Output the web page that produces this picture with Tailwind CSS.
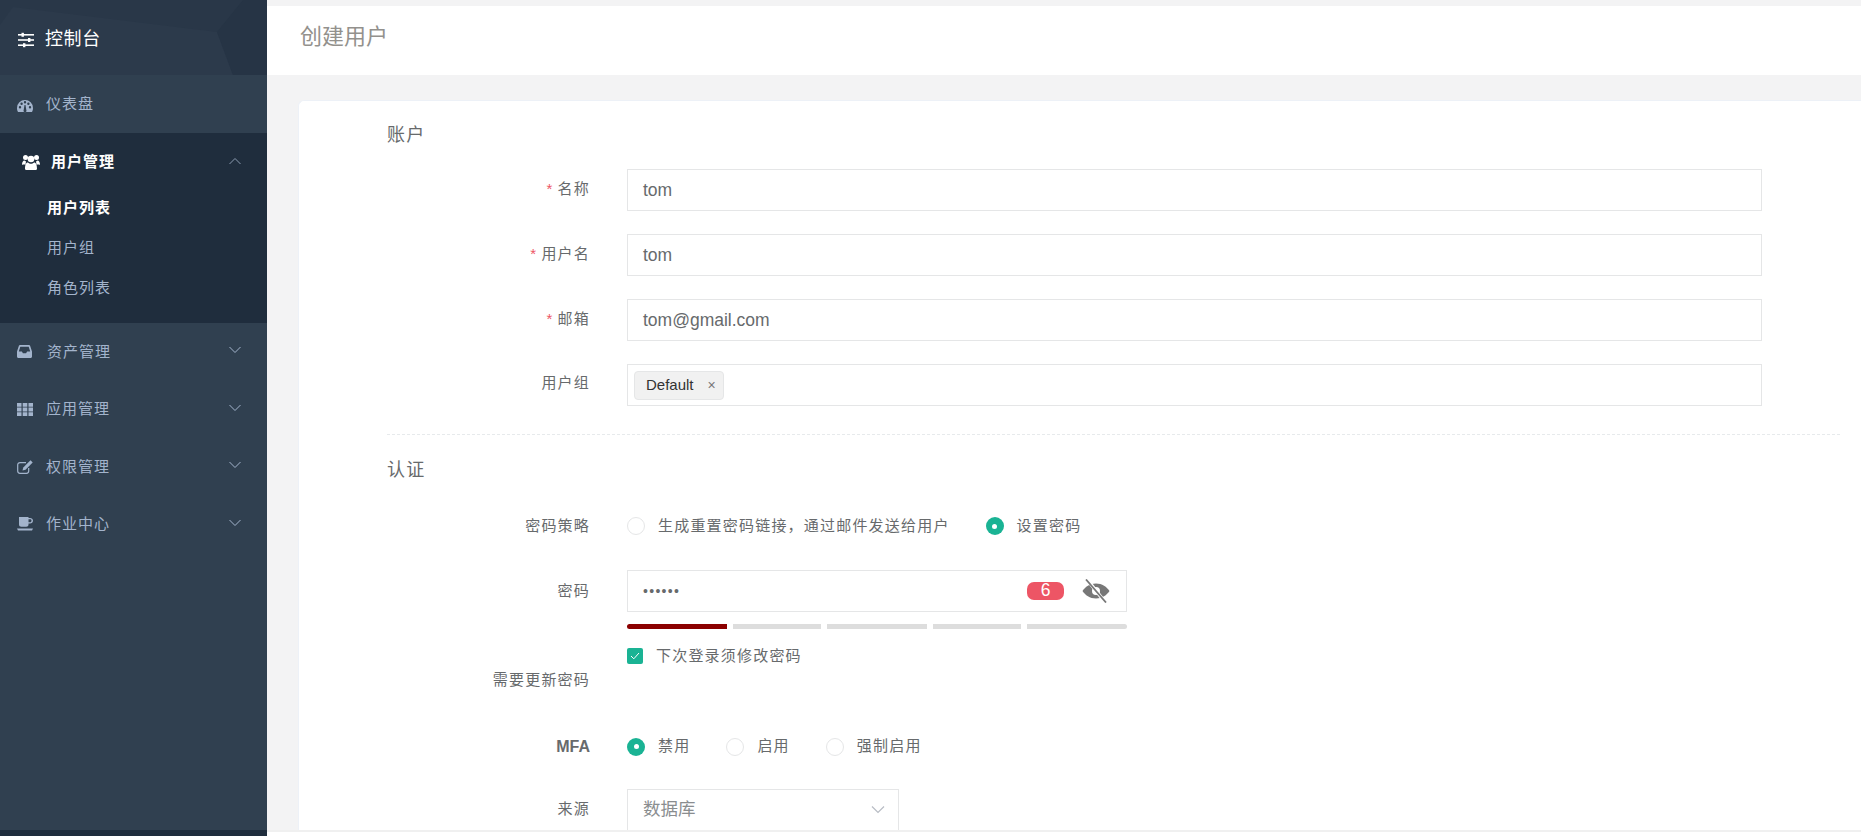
<!DOCTYPE html>
<html lang="zh-CN">
<head>
  <meta charset="UTF-8" />
  <title>创建用户</title>
  <script src="https://cdn.jsdelivr.net/npm/@tailwindcss/browser@4"></script>
</head>
<body class="h-screen overflow-hidden bg-[#f3f3f4] text-[#676a6c] font-['Liberation_Sans','Noto_Sans_CJK_SC',sans-serif]">
<div class="flex h-[836px]">

  <!-- Sidebar -->
  <aside class="w-[267px] shrink-0 flex flex-col bg-[#304050] text-[15px] text-[#a3b4cc] tracking-[1px]">
    <div class="relative h-[75px] bg-[#293748] flex items-center pl-[18px] pt-[4px] text-white text-[18px] tracking-[0.6px] overflow-hidden">
      <svg class="absolute inset-0" width="267" height="75" viewBox="0 0 267 75"><polygon points="0,25 13,7 217,32 233,75 0,75" fill="#2c3a4b"/><polygon points="217,32 243,0 267,0 267,75 233,75" fill="#263445"/></svg>
      <svg class="relative mr-[11px]" width="16" height="16" viewBox="0 0 16 16" fill="#fff"><rect x="0" y="2" width="16" height="1.6"/><rect x="0" y="7.2" width="16" height="1.6"/><rect x="0" y="12.4" width="16" height="1.6"/><rect x="3.5" y="0.8" width="2.4" height="4"/><rect x="10" y="6" width="2.4" height="4"/><rect x="5" y="11.2" width="2.4" height="4"/></svg>
      <span class="relative">控制台</span>
    </div>
    <a class="h-[58px] flex items-center pl-[17px]">
      <svg class="mr-[13px] mt-[4px]" width="16" height="14" viewBox="0 0 16 14" fill="#a3b4cc"><path d="M8 1a8 8 0 0 0-8 8c0 1.600.4 3 1.100 4h13.800c.7-1 1.100-2.400 1.100-4a8 8 0 0 0-8-8zM3 9.500a1.200 1.200 0 1 1 0-2.400 1.200 1.200 0 0 1 0 2.400zm1.600-3.600a1.200 1.200 0 1 1 0-2.400 1.200 1.200 0 0 1 0 2.400zM8 4.400a1.200 1.200 0 1 1 0-2.400 1.200 1.200 0 0 1 0 2.400zm1.300 6.500a1.500 1.500 0 1 1-2.600 0L7.500 6h1zm2.100-5a1.200 1.200 0 1 1 0-2.400 1.200 1.200 0 0 1 0 2.400zM13 9.500a1.200 1.200 0 1 1 0-2.400 1.200 1.200 0 0 1 0 2.400z"/></svg>
      仪表盘
    </a>
    <div class="h-[190px] bg-[#1f2d3d]">
      <div class="h-[58px] flex items-center pl-[22px] pr-[26px] text-white font-bold">
        <svg class="mr-[11px]" width="18" height="16" viewBox="0 0 18 16" fill="#fff"><circle cx="3.500" cy="3.500" r="2.500"/><circle cx="14.500" cy="3.500" r="2.500"/><circle cx="9" cy="5" r="3.300"/><path d="M0 11c0-3 1-4.500 2.500-4.500L4 7.500 3.500 10.500H1.500C.7 10.500 0 11 0 11zM18 11c0-3-1-4.500-2.500-4.500L14 7.500l.5 3h2c.8 0 1.500.5 1.500.5zM4 16c-.6 0-1-.5-1-1.200C3 11 4 8.500 5.800 8.500 7 9.500 8 9.700 9 9.700s2-.2 3.200-1.200C14 8.500 15 11 15 14.800c0 .7-.4 1.200-1 1.200z"/></svg>
        <span class="flex-1">用户管理</span>
        <svg class="mb-[3px]" width="12" height="8" viewBox="0 0 12 8" fill="none" stroke="#8b9bb0" stroke-width="1"><path d="M0.500 7 6 1.500 11.500 7"/></svg>
      </div>
      <div class="pl-[47px] text-[15px]">
        <div class="h-[40px] flex items-center mt-[-3px] text-white font-bold">用户列表</div>
        <div class="h-[40px] flex items-center">用户组</div>
        <div class="h-[40px] flex items-center">角色列表</div>
      </div>
    </div>
    <div class="flex-1">
      <div class="h-[57.500px] flex items-center pl-[17px] pr-[26px]">
        <svg class="mr-[15px]" width="15" height="13" viewBox="0 0 15 13" fill="#a3b4cc"><path d="M3 0h9c.5 0 .9.300 1.100.800L15 6.500V11.500c0 .8-.6 1.500-1.500 1.500h-12C.6 13 0 12.300 0 11.500V6.500L1.900.800C2.100.300 2.500 0 3 0zm.3 1.800L1.800 6.500h3.100l1 1.700h3.200l1-1.700h3.100L11.700 1.800z"/></svg>
        <span class="flex-1">资产管理</span>
        <svg class="mb-[3px]" width="12" height="8" viewBox="0 0 12 8" fill="none" stroke="#a3b4cc" stroke-width="1"><path d="M0.500 1 6 6.500 11.500 1"/></svg>
      </div>
      <div class="h-[57.500px] flex items-center pl-[17px] pr-[26px]">
        <svg class="mr-[13px]" width="16" height="13" viewBox="0 0 16 13" fill="#a3b4cc"><path d="M0 0h4.500v3.800H0zM5.700 0h4.600v3.800H5.700zM11.500 0H16v3.800h-4.500zM0 4.600h4.500v3.800H0zM5.700 4.600h4.600v3.800H5.700zM11.500 4.600H16v3.800h-4.500zM0 9.200h4.500V13H0zM5.700 9.200h4.600V13H5.700zM11.500 9.200H16V13h-4.500z"/></svg>
        <span class="flex-1">应用管理</span>
        <svg class="mb-[3px]" width="12" height="8" viewBox="0 0 12 8" fill="none" stroke="#a3b4cc" stroke-width="1"><path d="M0.500 1 6 6.500 11.500 1"/></svg>
      </div>
      <div class="h-[57.500px] flex items-center pl-[17px] pr-[26px]">
        <svg class="mr-[13px]" width="16" height="14" viewBox="0 0 16 14" fill="none" stroke="#a3b4cc"><path stroke-width="1.200" d="M9 2.600H3C1.700 2.600.700 3.500.700 4.800v6.300c0 1.300 1 2.200 2.300 2.200h6.500c1.300 0 2.200-1 2.200-2.200V8"/><path fill="#a3b4cc" stroke="none" d="M13.500.300 15.700 2.500 8.500 9.700 5.500 10.500 6.300 7.500z"/></svg>
        <span class="flex-1">权限管理</span>
        <svg class="mb-[3px]" width="12" height="8" viewBox="0 0 12 8" fill="none" stroke="#a3b4cc" stroke-width="1"><path d="M0.500 1 6 6.500 11.500 1"/></svg>
      </div>
      <div class="h-[57.500px] flex items-center pl-[17px] pr-[26px]">
        <svg class="mr-[13px]" width="16" height="14" viewBox="0 0 16 14" fill="#a3b4cc"><path d="M2 0h9.500v1h1.500c1.700 0 3 1.100 3 2.700S14.700 6.500 13 6.500h-1.500v1c0 1.300-1 2.300-2.300 2.300H4.300C3 9.800 2 8.800 2 7.500zM11.500 2.300v2.900H13c.9 0 1.500-.6 1.500-1.500s-.6-1.400-1.500-1.400zM0 11.500h16l-1 2H1z"/></svg>
        <span class="flex-1">作业中心</span>
        <svg class="mb-[3px]" width="12" height="8" viewBox="0 0 12 8" fill="none" stroke="#a3b4cc" stroke-width="1"><path d="M0.500 1 6 6.500 11.500 1"/></svg>
      </div>
    </div>
    <div class="h-[6px] bg-[#1f2d3d]"></div>
  </aside>

  <!-- Main -->
  <main class="flex-1 min-w-0 flex flex-col pt-[6px]">
    <div class="h-[69px] shrink-0 bg-white flex items-center pl-[33px] pb-[9px] text-[22px] text-[#93918d]">创建用户</div>

    <div class="flex-1 min-h-0 overflow-hidden pl-[31px] pt-[25px]">
      <div class="h-full bg-white rounded-tl-[6px] border-t border-l border-[#edf1f7] pl-[88px] pr-[21px] text-[15px] tracking-[1.200px]">

        <div class="h-[68px] flex items-center text-[18px] pt-[1px]">账户</div>

        <div class="flex flex-col gap-[23px] w-[1375px]">
          <div class="flex items-center h-[42px]">
            <label class="w-[203px] text-right pb-[2px]"><span class="text-[#ed5565] mr-[4px]">*</span>名称</label>
            <div class="ml-[37px] flex-1 h-full border border-[#e5e6e7] flex items-center pl-[15px] text-[17.500px] tracking-normal">tom</div>
          </div>
          <div class="flex items-center h-[42px]">
            <label class="w-[203px] text-right pb-[2px]"><span class="text-[#ed5565] mr-[4px]">*</span>用户名</label>
            <div class="ml-[37px] flex-1 h-full border border-[#e5e6e7] flex items-center pl-[15px] text-[17.500px] tracking-normal">tom</div>
          </div>
          <div class="flex items-center h-[42px]">
            <label class="w-[203px] text-right pb-[2px]"><span class="text-[#ed5565] mr-[4px]">*</span>邮箱</label>
            <div class="ml-[37px] flex-1 h-full border border-[#e5e6e7] flex items-center pl-[15px] text-[17.500px] tracking-normal">tom@gmail.com</div>
          </div>
          <div class="flex items-center h-[42px]">
            <label class="w-[203px] text-right pb-[3px]">用户组</label>
            <div class="ml-[37px] flex-1 h-full border border-[#e5e6e7] flex items-center pl-[6px] tracking-normal">
              <span class="h-[29px] w-[90px] rounded-[4px] bg-[#f1f1f1] border border-[#e5e6e7] flex items-center pl-[11px] text-[15px] text-[#333]">Default<span class="ml-[14px] text-[#777] text-[14px]">×</span></span>
            </div>
          </div>
        </div>

        <div class="mt-[28px] border-t border-dashed border-[#e7eaec]"></div>

        <div class="h-[69px] flex items-center text-[18px] pt-[1px]">认证</div>

        <div class="flex items-center h-[18px] mt-[13px]">
          <label class="w-[203px] text-right">密码策略</label>
          <div class="ml-[37px] flex items-center">
            <span class="w-[18px] h-[18px] rounded-full border border-[#e5e6e7]"></span>
            <span class="ml-[13px]">生成重置密码链接，通过邮件发送给用户</span>
            <span class="ml-[36px] w-[18px] h-[18px] rounded-full bg-[#1ab394] flex items-center justify-center"><span class="w-[5px] h-[5px] rounded-full bg-white"></span></span>
            <span class="ml-[13px]">设置密码</span>
          </div>
        </div>

        <div class="flex mt-[35px]">
          <label class="w-[203px] text-right h-[42px] leading-[42px]">密码</label>
          <div class="ml-[37px] w-[500px]">
            <div class="h-[42px] border border-[#e5e6e7] flex items-center pl-[15px] pr-[16px] tracking-normal">
              <span class="flex-1 text-[#676a6c] text-[14px] tracking-[1.300px]">••••••</span>
              <span class="w-[37px] h-[18px] rounded-[7px] bg-[#ed5565] text-white text-[17.500px] leading-[17px] text-center">6</span>
              <svg class="ml-[18px]" width="28" height="24" viewBox="0 0 28 24" fill="#777"><path d="M14 4.500C8 4.500 3 8 .5 12c2.500 4 7.500 7.500 13.500 7.500S25 16 27.500 12C25 8 20 4.500 14 4.500zm0 11.500a4 4 0 1 1 0-8 4 4 0 0 1 0 8z"/><path d="M5 0.500 23 23" stroke="#fff" stroke-width="3.500"/><path d="M4 .5 24 23.500" stroke="#777" stroke-width="1.800"/></svg>
            </div>
            <div class="flex gap-[6px] mt-[12px]">
              <span class="h-[5px] w-[100px] rounded-l-full bg-[#8b0000]"></span>
              <span class="h-[5px] w-[88px] bg-[#ddd]"></span>
              <span class="h-[5px] w-[100px] bg-[#ddd]"></span>
              <span class="h-[5px] w-[88px] bg-[#ddd]"></span>
              <span class="h-[5px] w-[100px] rounded-r-full bg-[#ddd]"></span>
            </div>
          </div>
        </div>

        <div class="flex mt-[18px]">
          <label class="w-[203px] text-right pt-[22px]">需要更新密码</label>
          <div class="ml-[37px] flex items-center h-[18px]">
            <span class="w-[16px] h-[16px] rounded-[2px] bg-[#1ab394] flex items-center justify-center">
              <svg width="10" height="8" viewBox="0 0 10 8" fill="none" stroke="#fff" stroke-width="1"><path d="M1 4 3.800 6.800 9 1"/></svg>
            </span>
            <span class="ml-[13px]">下次登录须修改密码</span>
          </div>
        </div>

        <div class="flex items-center h-[18px] mt-[46px]">
          <label class="w-[203px] text-right font-bold tracking-normal text-[16px]">MFA</label>
          <div class="ml-[37px] flex items-center">
            <span class="w-[18px] h-[18px] rounded-full bg-[#1ab394] flex items-center justify-center"><span class="w-[5px] h-[5px] rounded-full bg-white"></span></span>
            <span class="ml-[13px]">禁用</span>
            <span class="ml-[36px] w-[18px] h-[18px] rounded-full border border-[#e5e6e7]"></span>
            <span class="ml-[13px]">启用</span>
            <span class="ml-[36px] w-[18px] h-[18px] rounded-full border border-[#e5e6e7]"></span>
            <span class="ml-[13px]">强制启用</span>
          </div>
        </div>

        <div class="flex items-center h-[42px] mt-[33px]">
          <label class="w-[203px] text-right">来源</label>
          <div class="ml-[37px] w-[272px] h-full border border-[#e5e6e7] flex items-center pl-[15px] pr-[13px] text-[17.500px] tracking-normal text-[#8a8d8f]">
            <span class="flex-1">数据库</span>
            <svg width="14" height="9" viewBox="0 0 14 9" fill="none" stroke="#b8bcc4" stroke-width="1.200"><path d="M1 1.500 7 7.500 13 1.500"/></svg>
          </div>
        </div>
      </div>
    </div>

    <div class="h-[6px] shrink-0 bg-white border-t-2 border-[#f0f0f0]"></div>
  </main>
</div>
</body>
</html>
